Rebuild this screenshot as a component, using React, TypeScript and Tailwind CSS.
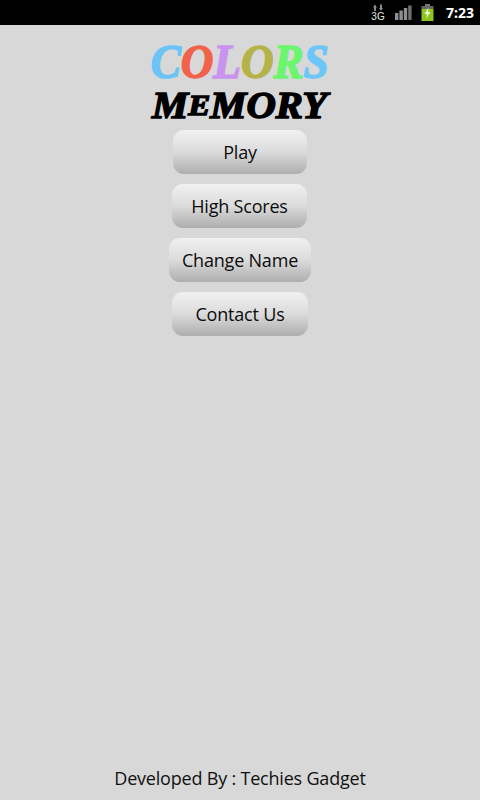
const btn =
  "h-[44px] rounded-[11px] bg-gradient-to-b from-[#f1f1f1] via-[#dcdbdb] to-[#aeaeae] flex items-center justify-center text-[18px] text-[#0c0c0c] tracking-[-0.2px]";

const logoLetters: { c: string; color: string }[] = [
  { c: "C", color: "#6cc3f7" },
  { c: "O", color: "#f2624a" },
  { c: "L", color: "#c994f0" },
  { c: "O", color: "#b5b347" },
  { c: "R", color: "#6cf56e" },
  { c: "S", color: "#6cc6f9" },
];

export default function App() {
  return (
    <div className="w-[480px] h-[800px] bg-[#d8d8d8] flex flex-col items-center overflow-hidden font-['Open_Sans','Noto_Sans',sans-serif]">
      <div className="w-full h-[25px] bg-black shrink-0 flex items-center justify-end pr-[6px]">
        <div className="w-[12px] mr-[11px] flex flex-col items-center">
          <svg width="12" height="8" viewBox="0 0 12 8">
            <path d="M3 0.5 L5 3.5 H4 V7 H2 V3.5 H1 Z" fill="#8a8a8a" />
            <path d="M9 7 L11 4 H10 V0.5 H8 V4 H7 Z" fill="#8a8a8a" />
          </svg>
          <span className="text-[10px] leading-[10px] h-[10px] text-[#e8e8e8] font-['Liberation_Sans',sans-serif]">3G</span>
        </div>
        <svg width="17" height="15" viewBox="0 0 17 15" className="mr-[9px]">
          <rect x="0" y="8" width="3.4" height="7" fill="#8f8f8f" />
          <rect x="4.4" y="5.5" width="3.4" height="9.5" fill="#8f8f8f" />
          <rect x="8.8" y="3" width="3.4" height="12" fill="#8f8f8f" />
          <rect x="13.2" y="0.5" width="3.4" height="14.5" fill="#6f6f6f" />
        </svg>
        <svg width="13" height="17" viewBox="0 0 13 17" className="mr-[12px]">
          <rect x="4" y="0" width="5" height="2" fill="#777" />
          <rect x="0.5" y="2" width="12" height="3" fill="#666" />
          <rect x="0.5" y="5" width="12" height="12" fill="#8fc31f" />
          <path d="M7.5 3.5 L3.5 10 H6 L5 14.5 L9.5 8 H7 Z" fill="#f4f8e0" />
        </svg>
        <span className="text-[14px] font-bold text-white leading-none font-['Noto_Sans','Open_Sans',sans-serif]">7:23</span>
      </div>

      <div className="mt-[15px] h-[44px] flex items-center justify-center font-['Liberation_Serif',serif] italic font-black text-[48px] leading-none [-webkit-text-stroke:1.5px_currentColor] scale-x-[0.94]">
        {logoLetters.map((l, i) => (
          <span key={i} style={{ color: l.color }}>{l.c}</span>
        ))}
      </div>
      <div className="mt-[2px] h-[38px] flex items-center justify-center font-['Liberation_Serif',serif] italic font-black text-[37px] leading-none text-black [-webkit-text-stroke:1.5px_#000] scale-x-[1.1]">
        <span>M</span><span className="text-[30px]">E</span><span>MORY</span>
      </div>

      <div className="mt-[6px] flex flex-col items-center gap-[10px]">
        <div className={`${btn} w-[134px]`}>Play</div>
        <div className={`${btn} w-[135px] mr-[1px]`}>High Scores</div>
        <div className={`${btn} w-[142px]`}>Change Name</div>
        <div className={`${btn} w-[136px]`}>Contact Us</div>
      </div>

      <div className="mt-auto h-[44px] flex items-center text-[18px] text-[#111] tracking-[-0.2px]">
        Developed By : Techies Gadget
      </div>
    </div>
  );
}
